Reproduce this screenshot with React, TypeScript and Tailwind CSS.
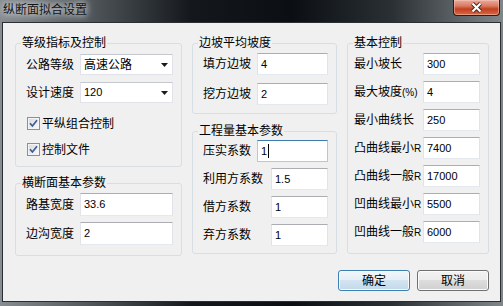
import React from 'react';

// Win7-style dialog: 纵断面拟合设置

function GroupBox({ title, className, children }: { title: string; className: string; children: React.ReactNode }) {
  return (
    <fieldset className={`border border-[#d5dfe5] rounded-[3px] ${className}`}>
      <legend className="ml-[5px] px-[1px] text-[12px] leading-[14px]">{title}</legend>
      {children}
    </fieldset>
  );
}

function TextBox({ value, className, focused }: { value: string; className: string; focused?: boolean }) {
  return (
    <div
      className={`bg-white border flex items-center pl-[3px] text-[11px] leading-[13px] ${
        focused
          ? 'border-[#a9cbe8] border-t-[#3d7bad]'
          : 'border-[#e2e3ea] border-t-[#abadb3] border-b-[#e3e9ef]'
      } ${className}`}
    >
      <span>{value}</span>
      {focused && <span className="ml-[1px] w-px h-[14px] bg-black" />}
    </div>
  );
}

function Select({ value, cjk }: { value: string; cjk?: boolean }) {
  return (
    <div className="w-[93px] h-[21px] bg-white border border-[#e2e3ea] border-t-[#c5c8cf] flex items-center justify-between pl-[3px] pr-[4px]">
      <span className={cjk ? 'text-[12px] leading-[14px]' : 'text-[11px] leading-[13px]'}>{value}</span>
      <svg width="7" height="4" viewBox="0 0 7 4">
        <path d="M0 0 H7 L3.5 4 Z" fill="#1a1a1a" />
      </svg>
    </div>
  );
}

function CheckBox({ label }: { label: string }) {
  return (
    <div className="ml-[1px] h-[13px] flex items-center gap-[2px]">
      <div className="w-[13px] h-[13px] border border-[#8e8f8f] bg-[linear-gradient(135deg,#d8d8d8,#fbfbfb)] shadow-[inset_0_0_0_1px_#f4f4f4] flex items-center justify-center">
        <svg width="9" height="9" viewBox="0 0 9 9">
          <path d="M1 4.2 L3.4 7 L8 1.2" fill="none" stroke="#3e5a9a" strokeWidth="1.7" />
        </svg>
      </div>
      <span className="text-[12px] leading-[14px]">{label}</span>
    </div>
  );
}

function Row({ label, labelW, children, h }: { label: React.ReactNode; labelW: string; children: React.ReactNode; h: string }) {
  return (
    <div className={`flex items-center ${h}`}>
      <span className={`${labelW} text-[12px] leading-[14px] whitespace-nowrap`}>{label}</span>
      {children}
    </div>
  );
}

function Button({ label, primary }: { label: string; primary?: boolean }) {
  return (
    <div
      className={`w-[72px] h-[21px] rounded-[3px] border flex items-center justify-center text-[12px] leading-[14px] shadow-[inset_0_0_0_1px_#fbfbfb] ${
        primary
          ? 'border-[#3c7fb1] bg-[linear-gradient(180deg,#f1f6fa_0%,#e4eef6_50%,#d3e4f1_50%,#c2d9ea_100%)]'
          : 'border-[#707070] bg-[linear-gradient(180deg,#f2f2f2_0%,#ebebeb_50%,#dddddd_50%,#cfcfcf_100%)]'
      }`}
    >
      {label}
    </div>
  );
}

const basic = [
  { label: '最小坡长', value: '300' },
  { label: <>最大坡度<span className="text-[10px]">(%)</span></>, value: '4' },
  { label: '最小曲线长', value: '250' },
  { label: <>凸曲线最小<span className="text-[10px]">R</span></>, value: '7400' },
  { label: <>凸曲线一般<span className="text-[10px]">R</span></>, value: '17000' },
  { label: <>凹曲线最小<span className="text-[10px]">R</span></>, value: '5500' },
  { label: <>凹曲线一般<span className="text-[10px]">R</span></>, value: '6000' },
];

export default function App() {
  return (
    <div className="w-[503px] h-[306px] flex flex-col overflow-hidden text-black font-['Liberation_Sans','Noto_Sans_CJK_SC',sans-serif] bg-[linear-gradient(90deg,#878d91_0%,#50565a_18%,#14181d_38%,#0b0f14_58%,#2a3034_78%,#80878b_100%)]">
      {/* title bar */}
      <div className="h-[22px] flex items-start justify-between">
        <div className="pl-[3px] pt-[3px] text-[12px] leading-[14px] text-[#141414] [text-shadow:0_0_6px_#e8ecee,0_0_10px_#d0d5d8]">
          纵断面拟合设置
        </div>
        <div className="mr-[3px] w-[47px] h-[16px] rounded-b-[4px] border border-t-0 border-[#3b1510] shadow-[inset_0_0_0_1px_rgba(255,210,200,0.45)] bg-[linear-gradient(180deg,#e9ab9c_0%,#d97a62_40%,#c2401f_60%,#d66a44_100%)] flex items-center justify-center">
          <svg width="13" height="11" viewBox="0 0 13 11">
            <path d="M2.5 1.5 L10.5 9.5 M10.5 1.5 L2.5 9.5" stroke="#4a2219" strokeWidth="4" />
            <path d="M2.5 1.5 L10.5 9.5 M10.5 1.5 L2.5 9.5" stroke="#fff" strokeWidth="2.2" />
          </svg>
        </div>
      </div>

      {/* client area */}
      <div className="mx-[2px] h-[280px] border border-[#2b2f33] bg-[#f0f0f0] flex flex-col">
        <div className="pt-[13px] pl-[12px] flex items-start gap-[10px]">
          {/* column 1 */}
          <div className="flex flex-col">
            <GroupBox title="等级指标及控制" className="w-[167px] h-[131px]">
              <div className="pl-[10px] pt-[4px] flex flex-col">
                <Row label="公路等级" labelW="w-[54px]" h="h-[21px]">
                  <Select value="高速公路" cjk />
                </Row>
                <Row label="设计速度" labelW="w-[54px]" h="h-[21px] mt-[7px]">
                  <Select value="120" />
                </Row>
                <div className="mt-[14px] flex flex-col gap-[13px]">
                  <CheckBox label="平纵组合控制" />
                  <CheckBox label="控制文件" />
                </div>
              </div>
            </GroupBox>
            <GroupBox title="横断面基本参数" className="mt-[9px] w-[167px] h-[80px]">
              <div className="pl-[10px] pt-[3px] flex flex-col gap-[6px]">
                <Row label="路基宽度" labelW="w-[54px]" h="h-[23px]">
                  <TextBox value="33.6" className="w-[93px] h-[23px]" />
                </Row>
                <Row label="边沟宽度" labelW="w-[54px]" h="h-[23px]">
                  <TextBox value="2" className="w-[93px] h-[23px]" />
                </Row>
              </div>
            </GroupBox>
          </div>

          {/* column 2 */}
          <div className="flex flex-col">
            <GroupBox title="边坡平均坡度" className="w-[145px] h-[78px]">
              <div className="pl-[10px] pt-[3px] flex flex-col gap-[8px]">
                <Row label="填方边坡" labelW="w-[54px]" h="h-[22px]">
                  <TextBox value="4" className="w-[71px] h-[22px]" />
                </Row>
                <Row label="挖方边坡" labelW="w-[54px]" h="h-[22px]">
                  <TextBox value="2" className="w-[71px] h-[22px]" />
                </Row>
              </div>
            </GroupBox>
            <GroupBox title="工程量基本参数" className="mt-[10px] w-[145px] h-[130px]">
              <div className="pl-[10px] pt-[2px] flex flex-col gap-[6px]">
                <Row label="压实系数" labelW="w-[54px]" h="h-[22px]">
                  <TextBox value="1" focused className="w-[71px] h-[22px]" />
                </Row>
                <Row label="利用方系数" labelW="w-[68px]" h="h-[22px]">
                  <TextBox value="1.5" className="w-[57px] h-[22px]" />
                </Row>
                <Row label="借方系数" labelW="w-[68px]" h="h-[22px]">
                  <TextBox value="1" className="w-[57px] h-[22px]" />
                </Row>
                <Row label="弃方系数" labelW="w-[68px]" h="h-[22px]">
                  <TextBox value="1" className="w-[57px] h-[22px]" />
                </Row>
              </div>
            </GroupBox>
          </div>

          {/* column 3 */}
          <GroupBox title="基本控制" className="w-[142px] h-[218px]">
            <div className="pl-[6px] pt-[3px] flex flex-col gap-[6px]">
              {basic.map((b, i) => (
                <Row key={i} label={b.label} labelW="w-[69px]" h="h-[22px]">
                  <TextBox value={b.value} className="w-[57px] h-[22px]" />
                </Row>
              ))}
            </div>
          </GroupBox>
        </div>

        <div className="mt-[14px] pr-[11px] flex justify-end gap-[7px]">
          <Button label="确定" primary />
          <Button label="取消" />
        </div>
      </div>
    </div>
  );
}
